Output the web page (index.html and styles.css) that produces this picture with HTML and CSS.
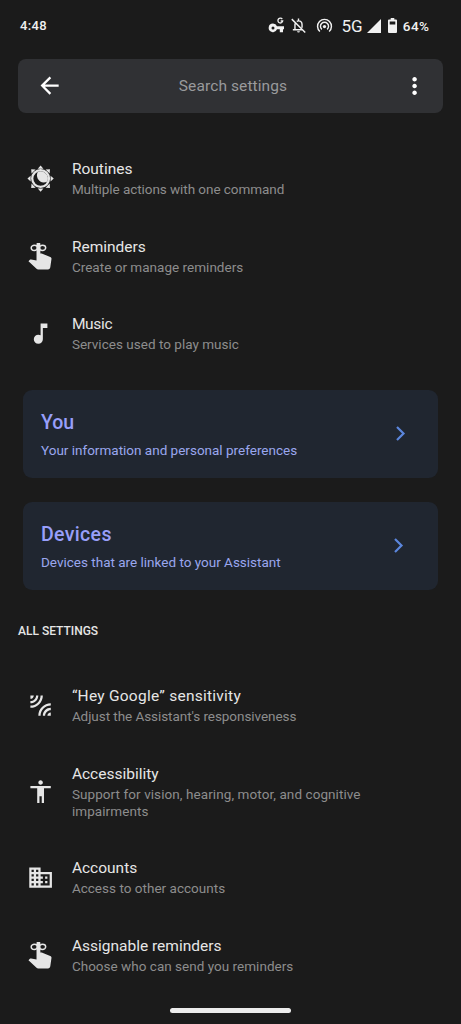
FILE: index.html
```html
<!DOCTYPE html>
<html lang="en">
<head>
<meta charset="utf-8">
<title>Assistant settings</title>
<link rel="stylesheet" href="styles.css">
</head>
<body>
<svg class="defs" width="0" height="0">
  <symbol id="reminder" viewBox="0.400 0.600 24 24">
    <path d="M10.500 0a1.700 1.700 0 0 1 1.700 1.700v8.100h1.200l7.500 3.200c.8.3 1.200.9 1.100 1.700l-1 7.100c-.2 1.300-.9 2.100-2.100 2.100H10.300c-.6 0-1.100-.2-1.500-.6L1.700 16.600l1-1.100c.4-.4.9-.5 1.400-.4l4.700.9V1.700A1.700 1.700 0 0 1 10.500 0z"/>
    <ellipse class="line" cx="6.900" cy="4.900" rx="2.800" ry="2.300"/>
    <ellipse class="line" cx="14.100" cy="4.900" rx="2.800" ry="2.300"/>
  </symbol>
</svg>
<header class="status">
  <span class="clock">4:48</span>
  <div class="indicators">
    <svg class="key" viewBox="0 0 17 17"><path fill-rule="evenodd" d="M5 6.500a4.300 4.300 0 0 1 4 2.800h7v3h-1v3h-3.200v-3H9A4.300 4.300 0 1 1 5 6.500zm0 2.900a1.500 1.500 0 1 0 0 3 1.500 1.500 0 0 0 0-3z"/><path class="line" d="M14.300 2.200A2.400 2.400 0 1 0 14.700 4h-2"/></svg>
    <svg class="bell" viewBox="0 0 24 24"><path d="M12 22a2 2 0 0 0 2-2h-4a2 2 0 0 0 2 2z"/><path class="line" d="M2.500 3l19 19M7.500 8.500C7 9.300 7 10 7 11v7h10.500M4 18h4M9.500 6.200C10.300 5.800 11 5.500 12 5.500c3 0 5 2.500 5 5.500v4M12 2v4"/></svg>
    <svg class="hotspot" viewBox="0 0 24 24"><circle cx="12" cy="13.500" r="2.300"/><path class="line" d="M5.500 20.500a9.800 9.800 0 1 1 13 0M8.300 17.500a5.700 5.700 0 1 1 7.400 0"/></svg>
    <span class="network">5G</span>
    <svg class="signal" viewBox="0 0 14 14"><path d="M14 0v14H0z"/></svg>
    <svg class="battery" viewBox="0 0 9 15"><path fill-rule="evenodd" d="M2.700 0h3.600v1.500H8a1 1 0 0 1 1 1V14a1 1 0 0 1-1 1H1a1 1 0 0 1-1-1V2.500a1 1 0 0 1 1-1h1.700zM1.700 3.400v3.200h5.600V3.400z"/></svg>
    <span class="percent">64%</span>
  </div>
</header>
<div class="search">
  <svg class="icon" viewBox="0 0 24 24"><path d="M20 11H7.830l5.590-5.590L12 4l-8 8 8 8 1.410-1.410L7.830 13H20v-2z"/></svg>
  <span class="placeholder">Search settings</span>
  <svg class="icon" viewBox="0 0.600 24 24"><path d="M12 8c1.100 0 2-.9 2-2s-.9-2-2-2-2 .9-2 2 .9 2 2 2zm0 2c-1.100 0-2 .9-2 2s.9 2 2 2 2-.9 2-2-.9-2-2-2zm0 6c-1.100 0-2 .9-2 2s.9 2 2 2 2-.9 2-2-.9-2-2-2z" transform="translate(0 1)"/></svg>
</div>
<main>
  <section class="list">
    <div class="row">
      <svg class="icon" viewBox="0 0 24 24"><path d="M12 .4l2.500 2.800h-5zM12 23.600l2.500-2.800h-5zM.4 12l2.800-2.500v5zM23.600 12l-2.800-2.500v5zM3.700 3.700l3.900.3L4 7.600zM20.300 3.700L20 7.600 16.400 4zM3.700 20.300L4 16.400 7.600 20zM20.300 20.300l-3.900-.3 3.600-3.600z"/><circle class="ring" cx="12" cy="12" r="7.400"/><path d="M9.500 6C6.800 11.500 12 17.800 18 14.500A6.600 6.600 0 0 0 9.500 6z"/></svg>
      <div class="text"><h2>Routines</h2><p class="tight">Multiple actions with one command</p></div>
    </div>
    <div class="row">
      <svg class="icon"><use href="#reminder"/></svg>
      <div class="text"><h2>Reminders</h2><p>Create or manage reminders</p></div>
    </div>
    <div class="row">
      <svg class="icon" viewBox="0 0 24 24"><path d="M12 3v10.550c-.59-.34-1.270-.55-2-.55-2.210 0-4 1.790-4 4s1.790 4 4 4 4-1.790 4-4V7h4V3h-6z"/></svg>
      <div class="text"><h2 class="tight">Music</h2><p>Services used to play music</p></div>
    </div>
  </section>
  <section class="cards">
    <div class="card">
      <div><h2>You</h2><p>Your information and personal preferences</p></div>
      <svg class="chevron" viewBox="0 0 9 15"><path d="M1 1l6.500 6.500L1 14"/></svg>
    </div>
    <div class="card devices">
      <div><h2>Devices</h2><p>Devices that are linked to your Assistant</p></div>
      <svg class="chevron" viewBox="0 0 9 15"><path d="M1 1l6.500 6.500L1 14"/></svg>
    </div>
  </section>
  <h3 class="heading">ALL SETTINGS</h3>
  <section class="list">
    <div class="row">
      <svg class="icon" viewBox="0 0 24 24"><path d="M6 3H3v3c1.660 0 3-1.340 3-3zm8 0h-2c0 4.970-4.030 9-9 9v2c6.080 0 11-4.930 11-11zm-4 0H8c0 2.760-2.240 5-5 5v2c3.870 0 7-3.130 7-7zm0 18h2c0-4.970 4.030-9 9-9v-2c-6.070 0-11 4.930-11 11zm8 0h3v-3c-1.660 0-3 1.340-3 3zm-4 0h2c0-2.760 2.240-5 5-5v-2c-3.870 0-7 3.130-7 7z"/></svg>
      <div class="text"><h2 class="wide">“Hey Google” sensitivity</h2><p class="tight">Adjust the Assistant's responsiveness</p></div>
    </div>
    <div class="row">
      <svg class="icon" viewBox="0 0 24 24"><path d="M12 2c1.100 0 2 .9 2 2s-.9 2-2 2-2-.9-2-2 .9-2 2-2zm9 7h-6v13h-2v-6h-2v6H9V9H3V7h18v2z"/></svg>
      <div class="text"><h2>Accessibility</h2><p class="long">Support for vision, hearing, motor, and cognitive impairments</p></div>
    </div>
    <div class="row">
      <svg class="icon" viewBox="0 0 24 24"><path d="M12 7V3H2v18h20V7H12zM6 19H4v-2h2v2zm0-4H4v-2h2v2zm0-4H4V9h2v2zm0-4H4V5h2v2zm4 12H8v-2h2v2zm0-4H8v-2h2v2zm0-4H8V9h2v2zm0-4H8V5h2v2zm10 12h-8v-2h2v-2h-2v-2h2v-2h-2V9h8v10zm-2-8h-2v2h2v-2zm0 4h-2v2h2v-2z"/></svg>
      <div class="text"><h2>Accounts</h2><p>Access to other accounts</p></div>
    </div>
    <div class="row">
      <svg class="icon"><use href="#reminder"/></svg>
      <div class="text"><h2>Assignable reminders</h2><p>Choose who can send you reminders</p></div>
    </div>
  </section>
</main>
<div class="home-bar"></div>
</body>
</html>
```
FILE: styles.css
```css
* { box-sizing: border-box; }
body {
  margin: 0;
  height: 1024px;
  overflow: hidden;
  display: flex;
  flex-direction: column;
  background: #1b1b1b;
  color: #e6e6e6;
  font-family: Roboto, "Open Sans", sans-serif;
}
h2, h3, p { margin: 0; font-weight: 400; }
svg { display: block; fill: currentColor; flex: none; overflow: visible; }
.defs { position: absolute; }
.line { fill: none; stroke: currentColor; stroke-width: 1.3; }
.ring { fill: none; stroke: currentColor; stroke-width: 2; }

.status {
  height: 59px;
  flex: none;
  padding: 0 31.500px 8px 20px;
  display: flex;
  align-items: center;
  justify-content: space-between;
  color: #f1f1f1;
  font-weight: 500;
}
.clock { font-size: 13px; letter-spacing: .35px; }
.indicators { display: flex; align-items: center; }
.key { width: 17px; height: 17px; margin-right: 5px; }
.bell { width: 17px; height: 17px; margin-right: 9px; }
.bell .line, .hotspot .line { stroke-width: 2; }
.hotspot { width: 17px; height: 17px; margin-right: 8px; }
.network { font-size: 17px; font-weight: 400; margin-right: 4px; }
.signal { width: 14px; height: 14px; margin-right: 7px; }
.battery { width: 9px; height: 15px; margin-right: 5px; }
.percent { font-size: 13.500px; letter-spacing: .5px; }
.network, .signal, .battery { position: relative; left: -1px; }
.key, .bell, .hotspot { position: relative; left: -1.500px; }

.search {
  height: 54px;
  flex: none;
  margin: 0 18px;
  padding: 0 15px 0 18px;
  border-radius: 8px;
  background: #303134;
  display: flex;
  align-items: center;
  justify-content: space-between;
  color: #fff;
}
.placeholder { color: #999a9c; font-size: 15.500px; letter-spacing: .1px; padding-left: 2px; }
.icon { width: 27.200px; height: 27.200px; }

.list { display: flex; flex-direction: column; }
main { padding-top: 26.800px; }
.row {
  padding: 19.450px 60px 19.450px 26.700px;
  display: flex;
  align-items: center;
  gap: 18px;
}
.text { display: flex; flex-direction: column; gap: 2px; }
.text h2 { font-size: 15.500px; line-height: 20px; }
.text p { font-size: 13.500px; line-height: 16.700px; color: #8d8d8d; letter-spacing: .02px; }
.text p.tight { letter-spacing: -.06px; }
.text p.long { letter-spacing: .08px; }
.text h2.tight { letter-spacing: -.3px; }
.text h2.wide { letter-spacing: .25px; }

.cards { padding: 17.400px 23px 0; display: flex; flex-direction: column; gap: 24.300px; }
.card {
  height: 87.700px;
  border-radius: 9px;
  padding: 0 33px 0 18px;
  background: #202630;
  display: flex;
  align-items: center;
  justify-content: space-between;
  color: #9aa7ee;
}
.devices { padding-right: 35px; }
.card h2 { font-size: 19.500px; line-height: 26px; font-weight: 500; color: #989ffa; padding-top: 1.500px; }
.devices h2 { letter-spacing: .35px; }
.card p { font-size: 13.500px; line-height: 18px; margin-top: 5.500px; }
.chevron { width: 9px; height: 15px; fill: none; stroke: #5b86dc; stroke-width: 2.200; }
.heading { font-size: 12px; font-weight: 500; line-height: 16px; padding: 33.900px 18px 27.500px; }
.home-bar {
  position: absolute;
  left: 170px;
  top: 1008px;
  width: 121px;
  height: 5px;
  border-radius: 3px;
  background: #ececec;
}
```
